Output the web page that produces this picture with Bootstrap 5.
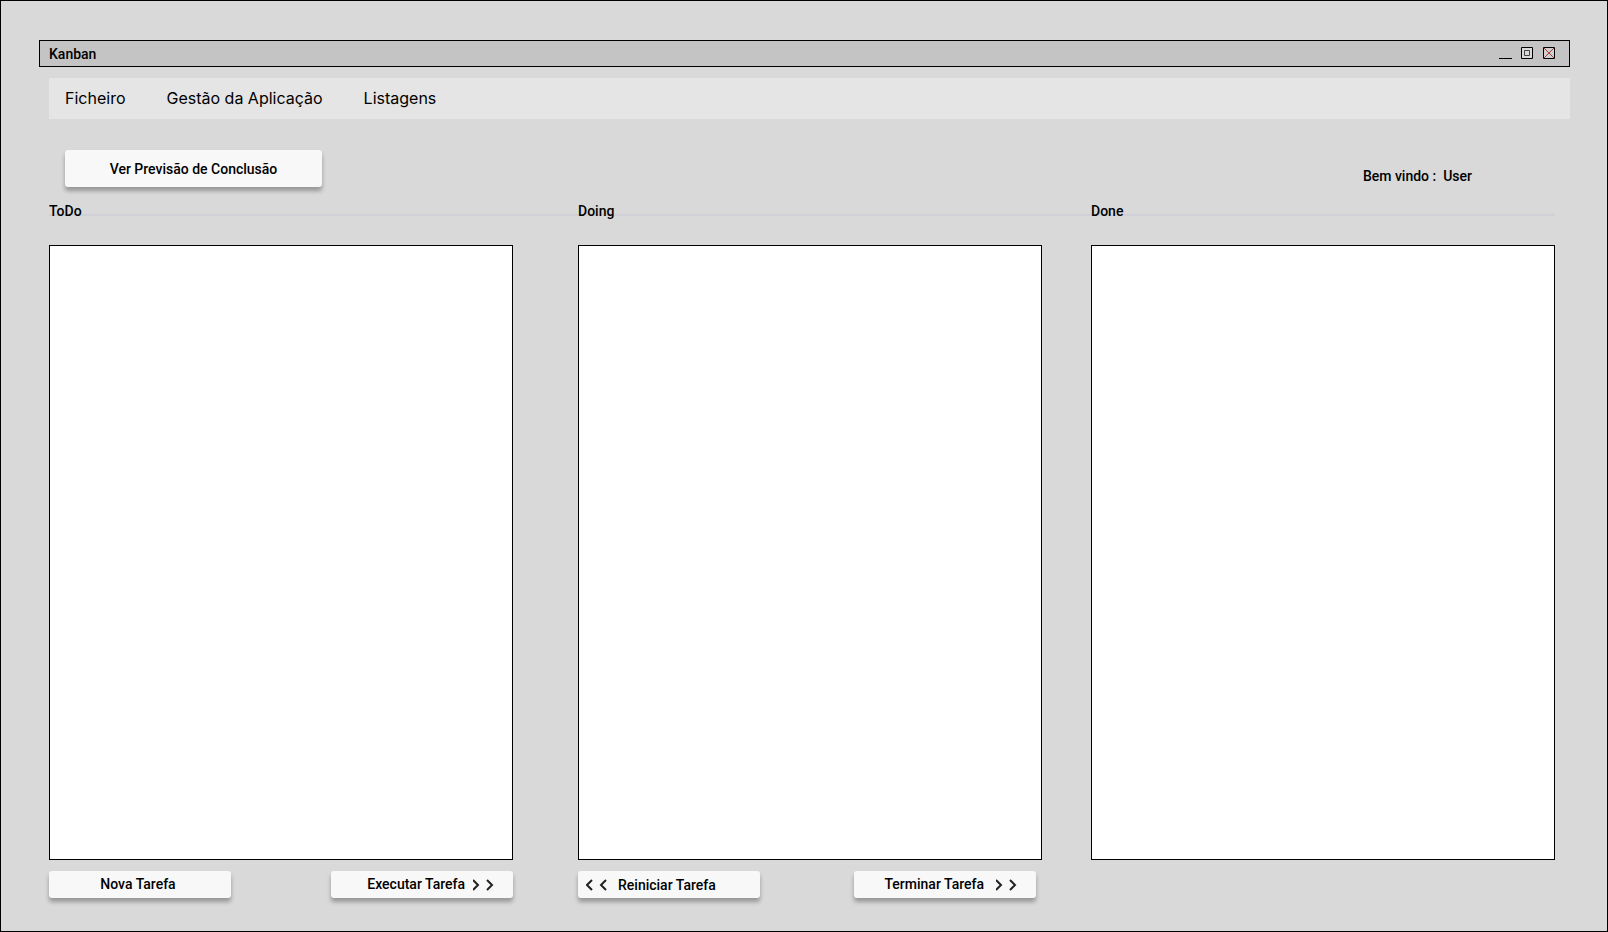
<!DOCTYPE html>
<html lang="pt">
<head>
<meta charset="utf-8">
<meta name="viewport" content="width=device-width, initial-scale=1">
<title>Kanban</title>
<link href="https://cdn.jsdelivr.net/npm/bootstrap@5.3.0/dist/css/bootstrap.min.css" rel="stylesheet">
<style>
  body { background: #d9d9d9; color: #000; font: 500 14px/20px Roboto, "Liberation Sans", sans-serif; }
  .app-window { border: 1px solid #000; padding: 39px 37px 33px 38px; }
  .title-strip { background: #c4c4c4; border: 1px solid #000; height: 27px; padding: 0 14px 0 9px; }
  .title-strip h1 { font-size: 14px; font-weight: 500; line-height: 20px; }
  .win-btn { width: 12px; height: 12px; }
  .win-btn svg { display: block; }
  .win-controls { gap: 10px; padding-bottom: 1px; }
  .menu-strip { background: #e5e5e5; height: 41px; margin: 11px 0 0 10px; padding: 0 16px 2px; gap: 41px; font: 400 16px/20px Inter, sans-serif; }
  .menu-strip a { color: #000; text-decoration: none; }
  .toolbar { margin: 31px 0 0 10px; padding: 0 98px 0 16px; }
  .btn-raised { background: #f8f8f8; border-radius: 3px; box-shadow: 0 4px 4px rgba(0, 0, 0, .3); color: #000; font-size: 14px; font-weight: 500; padding: 0; border: 0; }
  .btn-raised:hover { background: #fff; }
  .btn-forecast { width: 257px; height: 37px; line-height: 20px; padding-top: 1px; }
  .greeting { padding-top: 16px; }
  .board { margin: 14px 15px 0 10px; background: linear-gradient(#d0d0d6, #d0d0d6) 0 13px / 100% 2px no-repeat; }
  .lane { flex: 1 1 0; }
  .lane h2 { font-size: 14px; font-weight: 500; line-height: 20px; margin: 0 0 24px; }
  .lane-todo { margin-right: 65px; }
  .lane-doing { margin-right: 49px; }
  .task-list { background: #fff; border: 1px solid #000; min-height: 200px; }
  .lane-actions { height: 27px; margin-top: 11px; }
  .lane-doing .lane-actions { padding-right: 6px; }
  .btn-task { width: 182px; height: 27px; line-height: 26px; }
  .chevrons { width: 24px; height: 12px; fill: none; stroke: #222; stroke-width: 2; }
</style>
</head>
<body>
<div class="app-window min-vh-100 d-flex flex-column">
  <header>
    <div class="title-strip d-flex align-items-center justify-content-between">
      <h1 class="m-0">Kanban</h1>
      <div class="win-controls d-flex">
        <button type="button" class="win-btn btn border-0 rounded-0 p-0" aria-label="Minimizar">
          <svg width="13" height="12"><path d="M0 11.5h13" stroke="#000"/></svg>
        </button>
        <button type="button" class="win-btn btn border-0 rounded-0 p-0" aria-label="Maximizar">
          <svg width="12" height="12" fill="#d9d9d9"><path d="M.5.5h11v11H.5z" stroke="#000"/><path d="M3.500 3.500h5v5h-5z" stroke="#444"/></svg>
        </button>
        <button type="button" class="win-btn btn border-0 rounded-0 p-0" aria-label="Fechar">
          <svg width="12" height="12" fill="none"><path d="M.5.5h11v11H.5z" fill="#d0d0d0"/><path d="M1 1l10 10M11 1L1 11" stroke="#b33a3a"/><path d="M.5.5h11v11H.5z" stroke="#000"/></svg>
        </button>
      </div>
    </div>
    <nav class="menu-strip d-flex align-items-center">
      <a href="#">Ficheiro</a>
      <a href="#">Gestão da Aplicação</a>
      <a href="#">Listagens</a>
    </nav>
    <div class="toolbar d-flex align-items-start justify-content-between">
      <button type="button" class="btn btn-raised btn-forecast">Ver Previsão de Conclusão</button>
      <div class="greeting">Bem vindo :&nbsp; User</div>
    </div>
  </header>
  <main class="board d-flex flex-grow-1">
    <section class="lane lane-todo d-flex flex-column">
      <h2>ToDo</h2>
      <div class="task-list flex-grow-1"></div>
      <div class="lane-actions d-flex justify-content-between">
        <button type="button" class="btn btn-raised btn-task d-flex justify-content-center pe-1">Nova Tarefa</button>
        <button type="button" class="btn btn-raised btn-task d-flex justify-content-end gap-2">
          <span>Executar Tarefa</span>
          <svg class="chevrons align-self-center me-3"><path d="M0 1l5 5-5 5M14 1l5 5-5 5"/></svg>
        </button>
      </div>
    </section>
    <section class="lane lane-doing d-flex flex-column">
      <h2>Doing</h2>
      <div class="task-list flex-grow-1"></div>
      <div class="lane-actions d-flex justify-content-between">
        <button type="button" class="btn btn-raised btn-task d-flex align-items-end gap-2 ps-2">
          <svg class="chevrons align-self-center"><path d="M6 1l-5 5 5 5M20 1l-5 5 5 5"/></svg>
          <span>Reiniciar Tarefa</span>
        </button>
        <button type="button" class="btn btn-raised btn-task d-flex justify-content-end gap-2">
          <span class="pe-1">Terminar Tarefa</span>
          <svg class="chevrons align-self-center me-3"><path d="M0 1l5 5-5 5M14 1l5 5-5 5"/></svg>
        </button>
      </div>
    </section>
    <section class="lane d-flex flex-column">
      <h2>Done</h2>
      <div class="task-list flex-grow-1"></div>
      <div class="lane-actions"></div>
    </section>
  </main>
</div>
<script src="https://cdn.jsdelivr.net/npm/bootstrap@5.3.0/dist/js/bootstrap.bundle.min.js"></script>
</body>
</html>
